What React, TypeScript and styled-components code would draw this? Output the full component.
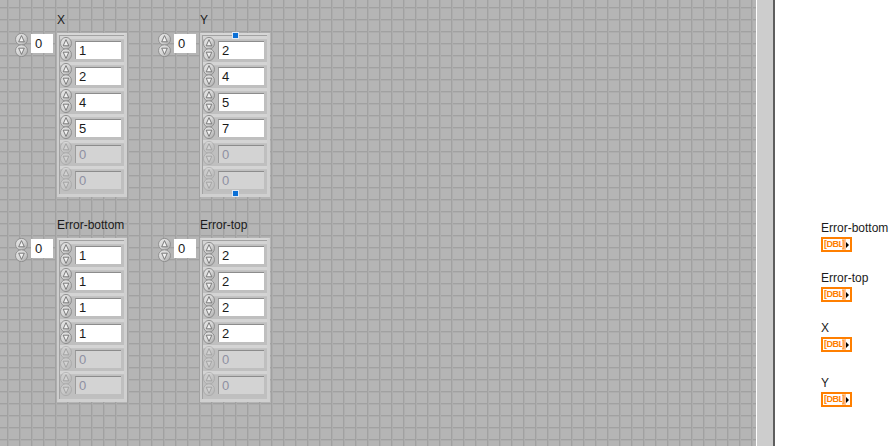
import styled, { createGlobalStyle } from "styled-components"

const GlobalStyle = createGlobalStyle`
  html, body {
    margin: 0;
    padding: 0;
  }
  body {
    width: 896px;
    height: 446px;
    overflow: hidden;
    font-family: "Liberation Sans", Arial, sans-serif;
  }
`

const Screen = styled.div`
  display: flex;
  width: 896px;
  height: 446px;
`

/* front panel with the LabVIEW grid */
const FrontPanel = styled.div`
  flex: 0 0 756px;
  box-sizing: border-box;
  padding: 12px 0 0 15px;
  background-color: #b5b5b5;
  background-image:
    linear-gradient(to right, #a1a1a1 0 1px, #adadad 1px 2px, transparent 2px),
    linear-gradient(to bottom, #a1a1a1 0 1px, #adadad 1px 2px, transparent 2px);
  background-size: 12px 12px;
  background-position: 7px 7px;
  display: grid;
  grid-template-columns: 143px 143px;
  grid-auto-rows: max-content;
  row-gap: 20px;
`

const PanelEdge = styled.div`
  flex: 0 0 1px;
  background: #ffffff;
`

const ScrollTrack = styled.div`
  flex: 0 0 16px;
  background: #cdcdcd;
  border-right: 2px solid #5e5e5e;
`

const BlockDiagram = styled.div`
  flex: 1;
  background: #ffffff;
  display: flex;
  flex-direction: column;
  padding: 0 0 0 46px;
`

/* array control */
const Cluster = styled.div`
  display: grid;
  grid-template-columns: 42px 70px;
  grid-template-rows: 16px auto;
  row-gap: 5px;
`

const Label = styled.div`
  grid-column: 2;
  font-size: 12px;
  line-height: 16px;
  color: #1b1b1b;
  white-space: nowrap;
`

const IndexGroup = styled.div`
  grid-column: 1;
  grid-row: 2;
  display: flex;
  align-items: flex-start;
  gap: 3px;
`

const IndexBox = styled.div`
  width: 22px;
  height: 19px;
  margin-top: 1px;
  box-sizing: border-box;
  padding-left: 4px;
  background: #ffffff;
  font-size: 13px;
  line-height: 19px;
  color: #1a1a1a;
`

const ArrayFrame = styled.div`
  grid-column: 2;
  grid-row: 2;
  position: relative;
  width: 70px;
  height: 164px;
  box-sizing: border-box;
  padding: 1px 0 0 1px;
  background: #c0c0c0;
  border-top: 2px solid #d7d7d7;
  border-left: 2px solid #cdcdcd;
  border-right: 3px solid #d0d0d0;
  border-bottom: 3px solid #d0d0d0;
  box-shadow: inset 1px 1px 0 #a2a2a2;
`

const Handle = styled.div<{ $edge: "top" | "bottom" }>`
  position: absolute;
  left: 30px;
  ${(p) => (p.$edge === "top" ? "top: -3px;" : "bottom: -3px;")}
  width: 5px;
  height: 5px;
  background: #0a6fd6;
  border: 1px solid #dfe9f5;
`

const Cell = styled.div`
  display: flex;
  align-items: flex-start;
  gap: 3px;
  height: 26px;
  background: linear-gradient(#d4d4d4 0 3px, #c4c4c4 3px 4px, #bfbfbf 4px);
`

const CellSpin = styled.div`
  margin-top: 1px;
  display: flex;
`

const ValueBox = styled.div<{ $disabled?: boolean }>`
  width: 46px;
  height: 18px;
  margin-top: 5px;
  box-sizing: border-box;
  padding-left: 3px;
  border-top: 1px solid #8c8c8c;
  border-left: 1px solid #9c9c9c;
  background: ${(p) => (p.$disabled ? "#d3d3d3" : "#ffffff")};
  color: ${(p) => (p.$disabled ? "#8e90a2" : "#1a1a1a")};
  font-size: 13px;
  line-height: 17px;
`

const SpinSvg = styled.svg<{ $faded?: boolean }>`
  display: block;
  opacity: ${(p) => (p.$faded ? 0.4 : 1)};
`

const Spinner = ({ w, faded }: { w: number; faded?: boolean }) => {
  const c = w / 2
  return (
    <SpinSvg width={w} height={24} viewBox={`0 0 ${w} 24`} $faded={faded}>
      <defs>
        <linearGradient id="spinFill" x1="0" y1="0" x2="1" y2="1">
          <stop offset="0" stopColor="#e8e8e8" />
          <stop offset="0.5" stopColor="#d6d6d6" />
          <stop offset="1" stopColor="#a4a4a4" />
        </linearGradient>
      </defs>
      <ellipse cx={c} cy={6.3} rx={c - 0.5} ry={5.9} fill="url(#spinFill)" stroke="#8a8a8a" strokeWidth={0.9} />
      <ellipse cx={c} cy={17.7} rx={c - 0.5} ry={5.9} fill="url(#spinFill)" stroke="#8a8a8a" strokeWidth={0.9} />
      <path d={`M${c} 2.6 L${c - 2.8} 8.8 H${c + 2.8} Z`} fill="#f2f2f2" stroke="#6e6e6e" strokeWidth={0.9} strokeLinejoin="round" />
      <path d={`M${c - 2.8} 15.2 H${c + 2.8} L${c} 21.4 Z`} fill="#f2f2f2" stroke="#6e6e6e" strokeWidth={0.9} strokeLinejoin="round" />
    </SpinSvg>
  )
}

type ArrayProps = {
  label: string
  values: number[]
  selected?: boolean
}

const ArrayControl = ({ label, values, selected }: ArrayProps) => {
  const cells = [...values.map((v) => ({ v, off: false })), { v: 0, off: true }, { v: 0, off: true }]
  return (
    <Cluster>
      <Label>{label}</Label>
      <IndexGroup>
        <Spinner w={13} />
        <IndexBox>0</IndexBox>
      </IndexGroup>
      <ArrayFrame>
        {cells.map((c, i) => (
          <Cell key={i}>
            <CellSpin>
              <Spinner w={12} faded={c.off} />
            </CellSpin>
            <ValueBox $disabled={c.off}>{c.v}</ValueBox>
          </Cell>
        ))}
        {selected && (
          <>
            <Handle $edge="top" />
            <Handle $edge="bottom" />
          </>
        )}
      </ArrayFrame>
    </Cluster>
  )
}

/* block diagram terminals */
const TerminalGroup = styled.div<{ $top: number }>`
  display: flex;
  flex-direction: column;
  gap: 2px;
  margin-top: ${(p) => p.$top}px;
`

const TermLabel = styled.div`
  font-size: 12px;
  line-height: 14px;
  color: #1b1b1b;
  white-space: nowrap;
`

const Terminal = styled.div`
  display: flex;
  align-items: stretch;
  width: 31px;
  height: 15px;
  box-sizing: border-box;
  border: 2px solid #ff7f00;
  background: #ffffff;
`

const TypeText = styled.span`
  flex: 1;
  padding-left: 1px;
  font-size: 9px;
  font-weight: bold;
  line-height: 11px;
  letter-spacing: -0.5px;
  color: #ff7f00;
  overflow: hidden;
`

const TypeEnd = styled.span`
  width: 4px;
  background: #ffc896;
  font-size: 9px;
  font-weight: bold;
  line-height: 11px;
  color: #ff9a40;
  overflow: hidden;
`

const Arrow = styled.span`
  align-self: center;
  width: 0;
  height: 0;
  margin-right: 1px;
  border-top: 3.5px solid transparent;
  border-bottom: 3.5px solid transparent;
  border-left: 3px solid #000000;
`

const terminals = [
  { name: "Error-bottom", top: 221 },
  { name: "Error-top", top: 19 },
  { name: "X", top: 19 },
  { name: "Y", top: 24 },
]

const App = () => {
  return (
    <>
      <GlobalStyle />
      <Screen>
        <FrontPanel>
          <ArrayControl label="X" values={[1, 2, 4, 5]} />
          <ArrayControl label="Y" values={[2, 4, 5, 7]} selected />
          <ArrayControl label="Error-bottom" values={[1, 1, 1, 1]} />
          <ArrayControl label="Error-top" values={[2, 2, 2, 2]} />
        </FrontPanel>
        <PanelEdge />
        <ScrollTrack />
        <BlockDiagram>
          {terminals.map((t) => (
            <TerminalGroup key={t.name} $top={t.top}>
              <TermLabel>{t.name}</TermLabel>
              <Terminal>
                <TypeText>[DBL</TypeText>
                <TypeEnd>]</TypeEnd>
                <Arrow />
              </Terminal>
            </TerminalGroup>
          ))}
        </BlockDiagram>
      </Screen>
    </>
  )
}

export default App
